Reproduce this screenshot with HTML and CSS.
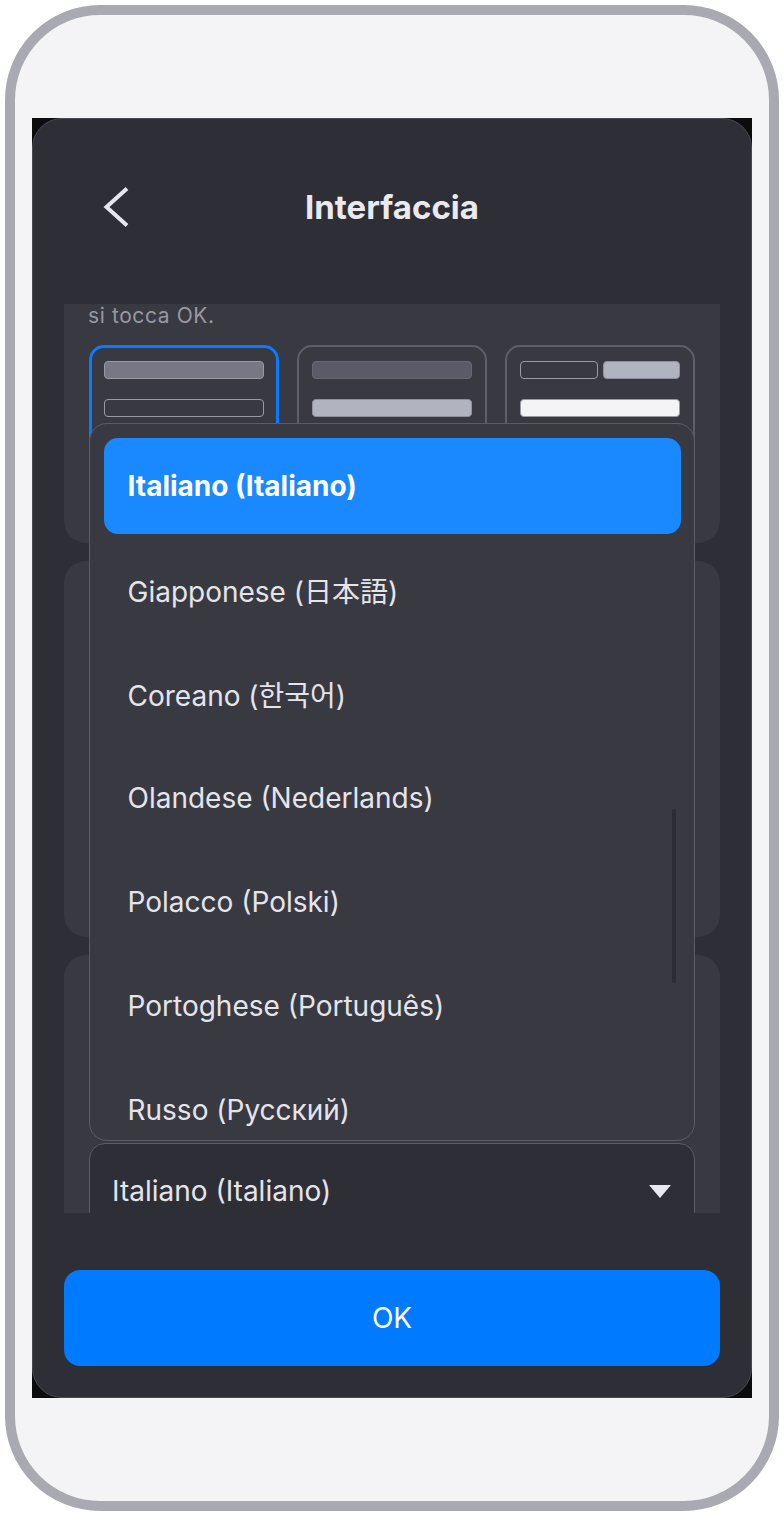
FILE: index.html
```html
<!DOCTYPE html>
<html lang="it">
<head>
<meta charset="utf-8">
<title>Interfaccia</title>
<link rel="stylesheet" href="styles.css">
</head>
<body>
<div class="phone">
  <div class="screen">
    <div class="modal">
      <header class="header">
        <button class="back" aria-label="Indietro">
          <svg width="26" height="40" viewBox="0 0 26 40"><path d="M24 1.5 L3.5 20 L24 38.5" fill="none" stroke="#e6e6ec" stroke-width="4"/></svg>
        </button>
        <h1 class="title">Interfaccia</h1>
        <span></span>
      </header>

      <div class="scroll">
        <section class="panel panel-first">
          <p class="hint">si tocca OK.</p>
          <div class="layouts">
            <div class="layout selected">
              <div class="bar bar-mid"></div>
              <div class="bar bar-outline"></div>
            </div>
            <div class="layout">
              <div class="bar bar-dim"></div>
              <div class="bar bar-light"></div>
            </div>
            <div class="layout">
              <div class="bar-row">
                <div class="bar bar-outline"></div>
                <div class="bar bar-light"></div>
              </div>
              <div class="bar bar-white"></div>
            </div>
          </div>
        </section>
        <section class="panel panel-second"></section>
        <section class="panel panel-third">
          <div class="select">
            <span>Italiano (Italiano)</span>
            <svg width="22" height="13" viewBox="0 0 22 13"><path d="M0 0 H22 L11 13 Z" fill="#e8e8ee"/></svg>
          </div>
        </section>
      </div>

      <button class="ok">OK</button>

      <div class="dropdown">
        <ul class="options">
          <li class="option active">Italiano (Italiano)</li>
          <li class="option">Giapponese (日本語)</li>
          <li class="option">Coreano (한국어)</li>
          <li class="option">Olandese (Nederlands)</li>
          <li class="option">Polacco (Polski)</li>
          <li class="option">Portoghese (Português)</li>
          <li class="option">Russo (Русский)</li>
        </ul>
        <div class="scrollbar"></div>
      </div>
    </div>
  </div>
</div>
</body>
</html>
```

FILE: styles.css
```css
* { box-sizing: border-box; }

html, body {
  margin: 0;
  padding: 0;
  background: #ffffff;
}

body {
  font-family: Inter, "Noto Sans", "Noto Sans CJK JP", "Noto Sans CJK KR", sans-serif;
}

.phone {
  margin: 5px 0 0 5px;
  width: 774px;
  height: 1506px;
  border: 10px solid #a9a9b1;
  border-radius: 95px;
  background: #f4f4f6;
  padding: 103px 17px 0 17px;
}

.screen {
  width: 720px;
  height: 1280px;
  background: #0c0c0e;
}

.modal {
  position: relative;
  width: 720px;
  height: 1280px;
  background: #2e2e37;
  border: 1px solid #4a4a55;
  border-radius: 30px;
  display: flex;
  flex-direction: column;
}

.header {
  height: 185px;
  padding-bottom: 9px;
  display: grid;
  grid-template-columns: 1fr auto 1fr;
  align-items: center;
}

.back {
  justify-self: start;
  margin-left: 70px;
  padding: 0;
  border: 0;
  background: none;
  display: flex;
}

.title {
  margin: 0;
  font-size: 33px;
  font-weight: 700;
  color: #e9e9ee;
}

.scroll {
  margin: 0 31px;
  height: 909px;
  overflow: hidden;
  display: flex;
  flex-direction: column;
  gap: 18px;
}

.panel {
  background: #393942;
  border-radius: 22px;
  flex: none;
}

.panel-first {
  height: 239px;
  border-radius: 0 0 22px 22px;
  padding: 0 25px;
}

.hint {
  margin: 0 0 0 -1px;
  font-size: 21px;
  line-height: 24px;
  letter-spacing: 0.6px;
  color: #9898a2;
}

.layouts {
  margin-top: 17px;
  display: grid;
  grid-template-columns: repeat(3, 1fr);
  gap: 18px;
}

.layout {
  height: 175px;
  border: 2px solid #5e5e69;
  border-radius: 15px;
  padding: 14px 13px;
  display: flex;
  flex-direction: column;
  gap: 20px;
}

.layout.selected {
  border: 3px solid #0a7bff;
  padding: 13px 12px;
}

.bar {
  height: 18px;
  border-radius: 4px;
  border: 1.5px solid #9a9aa5;
}

.bar-mid { background: #787884; }
.bar-outline { background: transparent; }
.bar-dim { background: #5a5b66; border-color: #676772; }
.bar-light { background: #b1b4be; border-color: #8e909b; }
.bar-white { background: #f4f4f6; border-color: #9a9aa5; }

.bar-row {
  display: grid;
  grid-template-columns: 1fr 1fr;
  gap: 5px;
}

.panel-second {
  height: 376px;
}

.panel-third {
  height: 400px;
  padding: 188px 25px 0 25px;
}

.select {
  height: 96px;
  background: #2e2e37;
  border: 1.5px solid #5c5c67;
  border-radius: 16px;
  padding: 0 23px 0 22px;
  display: flex;
  align-items: center;
  justify-content: space-between;
  font-size: 28px;
  color: #e4e4ea;
}

.ok {
  margin: 57px 31px 0 31px;
  height: 96px;
  border: 0;
  border-radius: 16px;
  background: #007aff;
  color: #ffffff;
  font-family: Inter, "Noto Sans", sans-serif;
  font-size: 28px;
}

.dropdown {
  position: absolute;
  left: 56px;
  top: 304px;
  width: 606px;
  height: 718px;
  background: #393942;
  border: 1.5px solid #5c5c67;
  border-radius: 18px;
  overflow: hidden;
}

.options {
  list-style: none;
  margin: 0;
  padding: 13.5px;
  display: flex;
  flex-direction: column;
  gap: 8px;
}

.option {
  flex: none;
  height: 96px;
  padding-left: 24px;
  display: flex;
  align-items: center;
  font-size: 28px;
  color: #e4e4ea;
  border-radius: 14px;
}

.option.active {
  background: #1a88fe;
  color: #ffffff;
  font-weight: 700;
}

.scrollbar {
  position: absolute;
  left: 581.5px;
  top: 384.5px;
  width: 4px;
  height: 174px;
  border-radius: 2px;
  background: #2c2c34;
}
```
